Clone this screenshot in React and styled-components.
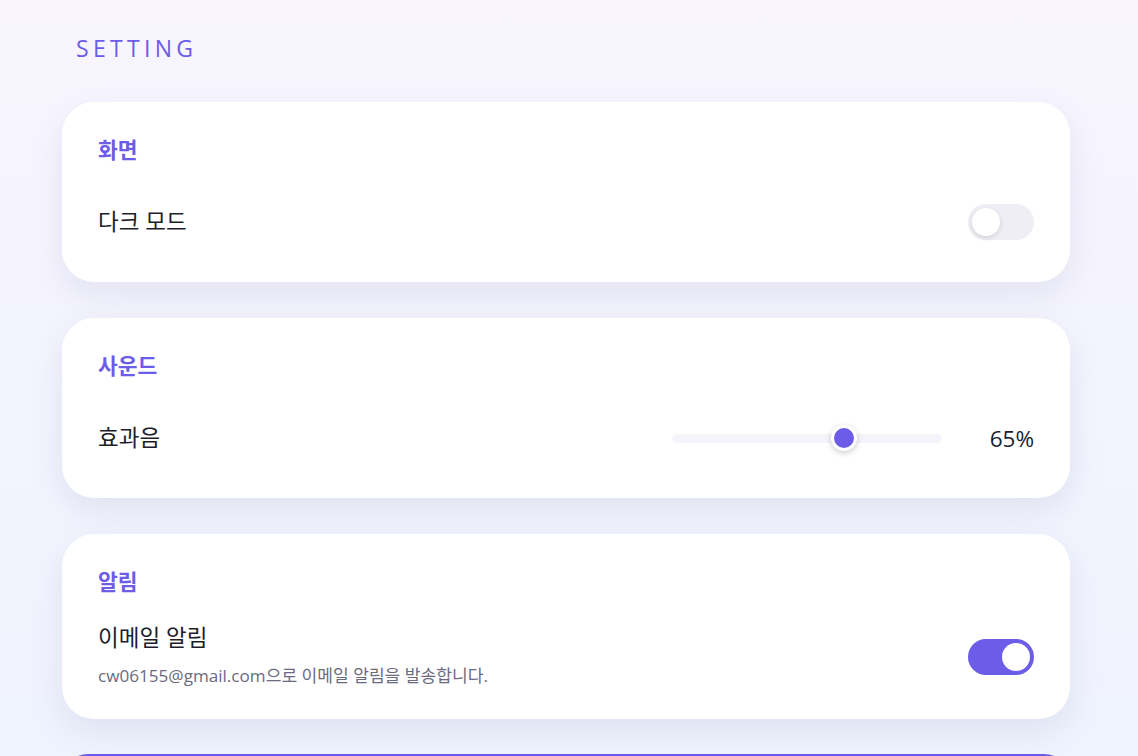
import React, { useState } from 'react';
import styled, { createGlobalStyle } from 'styled-components';

const GlobalStyle = createGlobalStyle`
	html, body {
		margin: 0;
		padding: 0;
	}
	body {
		min-height: 100vh;
		background: linear-gradient(180deg, #f8f5fe 0%, #eff3fd 100%);
		background-attachment: fixed;
		font-family: "Open Sans", "Noto Sans CJK KR", sans-serif;
		color: #1d1d2b;
	}
`

const Page = styled.div`
	padding: 34px 68px 60px 62px;
	display: flex;
	flex-direction: column;
`

const PageTitle = styled.h1`
	margin: 0 0 40px 14px;
	font-size: 23px;
	line-height: 28px;
	font-weight: 400;
	letter-spacing: 4.3px;
	color: #6c5ce7;
`

const Cards = styled.div`
	display: flex;
	flex-direction: column;
	gap: 36px;
`

const Card = styled.section`
	background: #fff;
	border-radius: 32px;
	padding: 36px 36px 32px;
	box-shadow: 0 12px 32px rgba(120, 120, 170, 0.14);
`

const CardTitle = styled.h2`
	margin: 0 0 32px;
	font-size: 21.5px;
	line-height: 24px;
	font-weight: 700;
	color: #6c5ce7;
`

const Row = styled.div`
	display: flex;
	align-items: center;
	justify-content: space-between;
	min-height: 56px;
`

const Label = styled.div`
	display: flex;
	flex-direction: column;
	.main {
		font-size: 22.5px;
		line-height: 24px;
		color: #1d1d2b;
	}
	.desc {
		margin-top: 15px;
		font-size: 17.1px;
		line-height: 22px;
		color: #6b6b80;
	}
`

const Switch = styled.button`
	position: relative;
	width: 66px;
	height: 36px;
	border: none;
	padding: 0;
	border-radius: 18px;
	cursor: pointer;
	background: ${p => (p.$on ? '#6c5ce7' : '#eeeef4')};
	&::after {
		content: '';
		position: absolute;
		top: 4px;
		left: ${p => (p.$on ? '34px' : '4px')};
		width: 28px;
		height: 28px;
		border-radius: 50%;
		background: #fff;
		box-shadow: ${p => (p.$on ? 'none' : '0 2px 5px rgba(0,0,0,0.12)')};
		transition: left 0.2s;
	}
`

const SliderWrap = styled.div`
	display: flex;
	align-items: center;
	gap: 46px;
`

const Track = styled.div`
	position: relative;
	width: 270px;
	height: 9px;
	border-radius: 5px;
	background: #f5f4fb;
`

const Thumb = styled.div`
	position: absolute;
	top: 50%;
	width: 20px;
	height: 20px;
	border-radius: 50%;
	background: #6c5ce7;
	border: 3px solid #fff;
	box-shadow: 0 2px 6px rgba(0, 0, 0, 0.2);
	transform: translate(-50%, -50%);
`

const Value = styled.span`
	width: 46px;
	text-align: right;
	font-size: 22.5px;
	color: #1d1d2b;
`

const BottomButton = styled.button`
	margin-top: 35px;
	height: 56px;
	border: none;
	border-radius: 26px;
	background: #6c5ce7;
`

const Slider = ({ value }) => {
	const pos = 12 + (value / 100) * (270 - 24);
	return (
		<SliderWrap>
			<Track>
				<Thumb style={{ left: pos }} />
			</Track>
			<Value>{value}%</Value>
		</SliderWrap>
	)
}

const App = () => {
	const [dark, setDark] = useState(false);
	const [mail, setMail] = useState(true);

	return (
		<>
			<GlobalStyle />
			<Page>
				<PageTitle>SETTING</PageTitle>
				<Cards>
					<Card>
						<CardTitle>화면</CardTitle>
						<Row>
							<Label><span className="main">다크 모드</span></Label>
							<Switch $on={dark} onClick={() => setDark(!dark)} />
						</Row>
					</Card>
					<Card>
						<CardTitle>사운드</CardTitle>
						<Row>
							<Label><span className="main">효과음</span></Label>
							<Slider value={65} />
						</Row>
					</Card>
					<Card>
						<CardTitle>알림</CardTitle>
						<Row>
							<Label>
								<span className="main">이메일 알림</span>
								<span className="desc">cw06155@gmail.com으로 이메일 알림을 발송합니다.</span>
							</Label>
							<Switch $on={mail} onClick={() => setMail(!mail)} />
						</Row>
					</Card>
				</Cards>
				<BottomButton aria-label="logout" />
			</Page>
		</>
	)
}

export default App;
